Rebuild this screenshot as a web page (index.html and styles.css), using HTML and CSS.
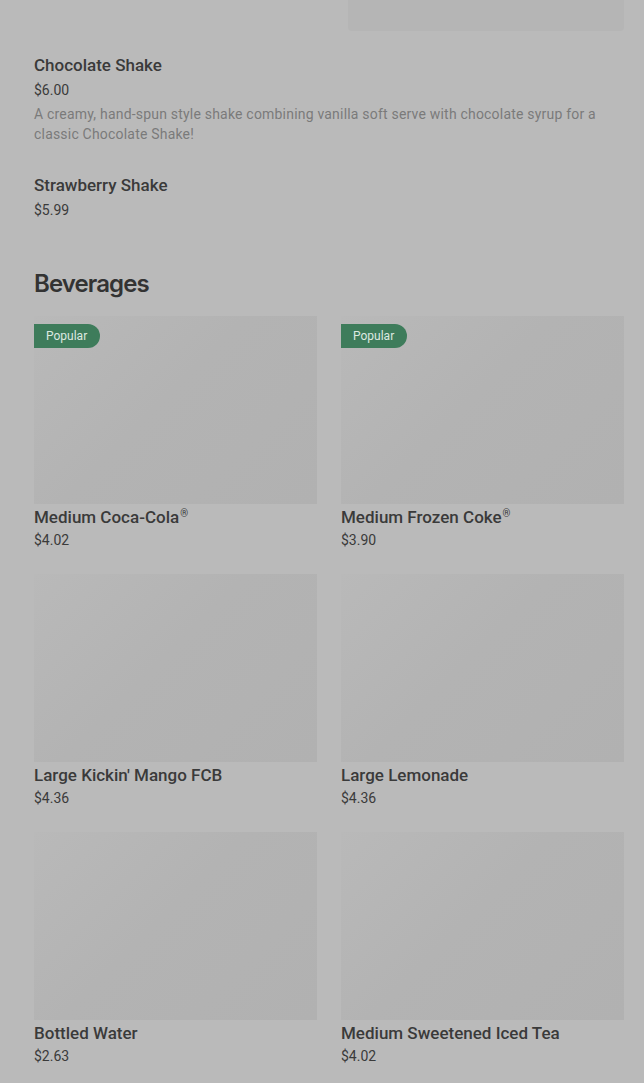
FILE: index.html
```html
<!DOCTYPE html>
<html lang="en">
<head>
  <meta charset="UTF-8" />
  <meta name="viewport" content="width=device-width, initial-scale=1.0" />
  <title>Menu</title>
  <link rel="stylesheet" href="styles.css">
</head>
<body>
  <main class="menu">

    <div class="prev-row">
      <div class="prev-thumb"></div>
    </div>

    <div class="list-item">
      <h3 class="item-name">Chocolate Shake</h3>
      <div class="item-price">$6.00</div>
      <p class="item-desc">A creamy, hand-spun style shake combining vanilla soft serve with chocolate syrup for a classic Chocolate Shake!</p>
    </div>

    <div class="list-item">
      <h3 class="item-name">Strawberry Shake</h3>
      <div class="item-price">$5.99</div>
    </div>

    <section class="category">
      <h2 class="category-title">Beverages</h2>
      <div class="grid">
        <div class="card">
          <div class="card-img"><span class="badge">Popular</span></div>
          <h3 class="item-name">Medium Coca-Cola<span class="reg">®</span></h3>
          <div class="item-price">$4.02</div>
        </div>
        <div class="card">
          <div class="card-img"><span class="badge">Popular</span></div>
          <h3 class="item-name">Medium Frozen Coke<span class="reg">®</span></h3>
          <div class="item-price">$3.90</div>
        </div>
        <div class="card">
          <div class="card-img"></div>
          <h3 class="item-name">Large Kickin' Mango FCB</h3>
          <div class="item-price">$4.36</div>
        </div>
        <div class="card">
          <div class="card-img"></div>
          <h3 class="item-name">Large Lemonade</h3>
          <div class="item-price">$4.36</div>
        </div>
        <div class="card">
          <div class="card-img"></div>
          <h3 class="item-name">Bottled Water</h3>
          <div class="item-price">$2.63</div>
        </div>
        <div class="card">
          <div class="card-img"></div>
          <h3 class="item-name">Medium Sweetened Iced Tea</h3>
          <div class="item-price">$4.02</div>
        </div>
      </div>
    </section>

  </main>
</body>
</html>
```

FILE: styles.css
```css
body {
  margin: 0;
  padding: 0;
  background: #bababa;
  color: #323232;
  font-family: Roboto, "Liberation Sans", Arial, sans-serif;
}
.menu {
  padding: 0 20px 40px 34px;
}
.prev-row {
  display: flex;
  justify-content: flex-end;
}
.prev-thumb {
  width: 276px;
  height: 31px;
  background: #b5b5b5;
  border-radius: 0 0 4px 4px;
}
.list-item {
  padding: 24px 0 8px;
}
.list-item + .list-item {
  padding-top: 23px;
}
.item-name {
  margin: 0;
  font-size: 17px;
  font-weight: 500;
  line-height: 20px;
  color: #3a3a3a;
}
.reg {
  font-size: 10px;
  vertical-align: top;
  line-height: 14px;
  margin-left: 1px;
}
.item-price {
  margin-top: 5px;
  font-size: 14px;
  line-height: 20px;
  color: #3a3a3a;
}
.item-desc {
  margin: 4px 0 0;
  font-size: 14px;
  line-height: 20px;
  letter-spacing: 0.2px;
  color: #7a7a7a;
}
.category {
  padding-top: 41px;
}
.category-title {
  margin: 0 0 17px;
  font-family: Inter, "Noto Sans", sans-serif;
  font-size: 24px;
  font-weight: 600;
  line-height: 30px;
  letter-spacing: -0.9px;
  color: #333;
}
.grid {
  display: grid;
  grid-template-columns: 1fr 1fr;
  column-gap: 24px;
  row-gap: 24px;
}
.card-img {
  position: relative;
  height: 188px;
  background: linear-gradient(135deg, #b9b9b9 0%, #b3b3b3 45%, #b1b1b1 100%);
  margin-bottom: 3px;
}
.card .item-price {
  margin-top: 3px;
}
.badge {
  position: absolute;
  top: 8px;
  left: 0;
  background: #3e7c5b;
  color: #dde9e1;
  font-size: 12px;
  line-height: 24px;
  padding: 0 13px 0 12px;
  border-radius: 0 12px 12px 0;
}
```
